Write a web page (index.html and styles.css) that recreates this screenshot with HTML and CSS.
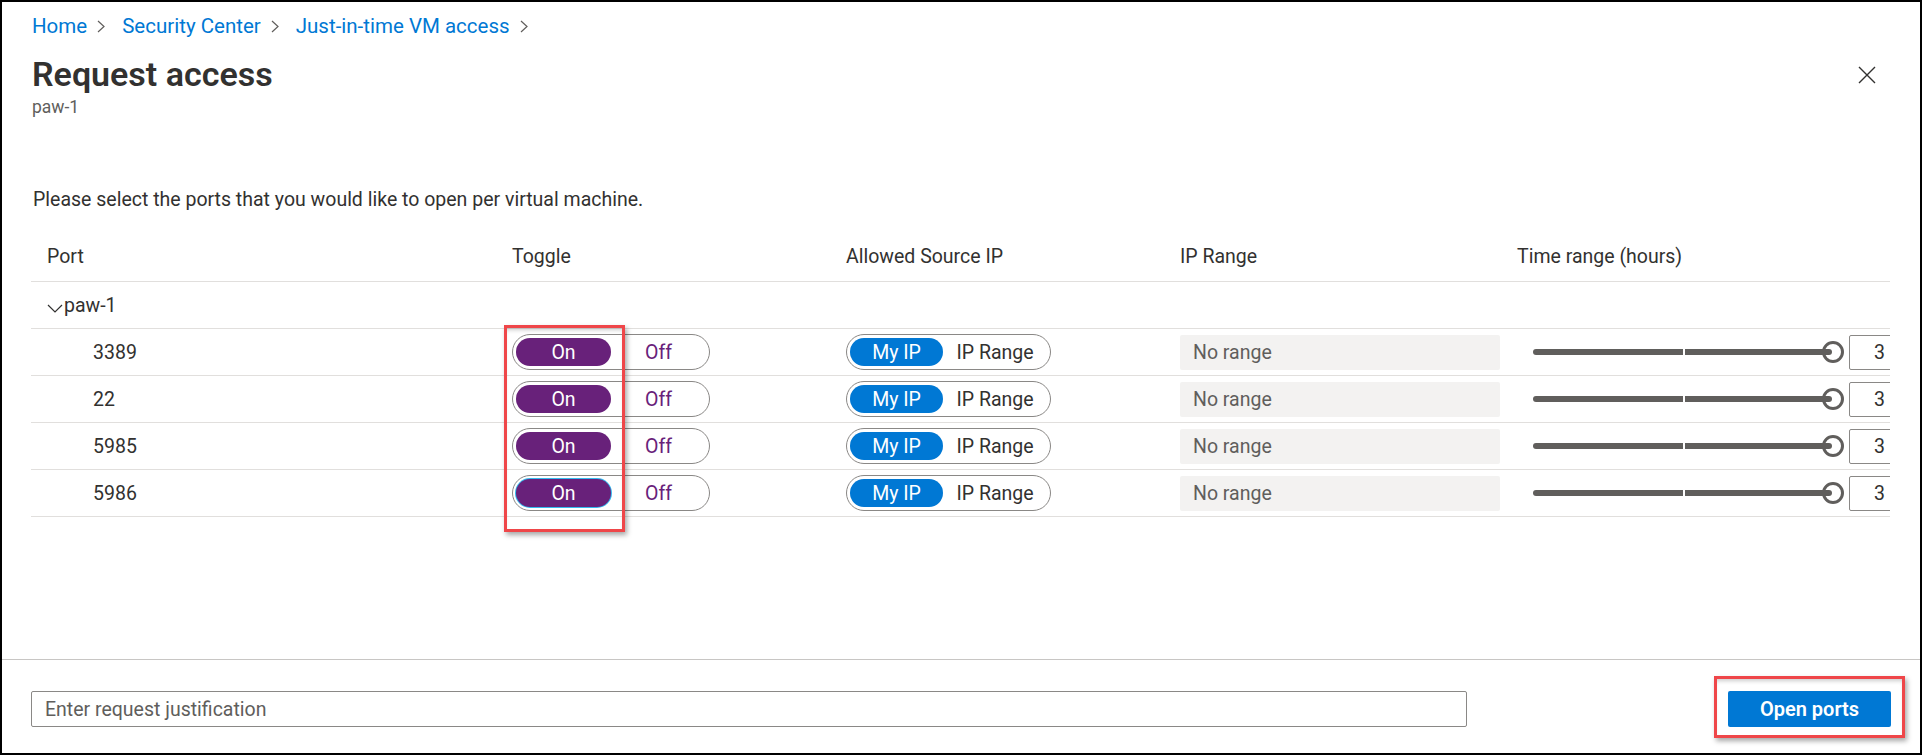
FILE: index.html
```html
<!DOCTYPE html>
<html lang="en">
<head>
<meta charset="utf-8">
<title>Request access</title>
<link rel="stylesheet" href="styles.css">
</head>
<body>
<div class="frame">
  <header class="blade-head">
    <nav class="crumbs">
      <a class="crumb">Home</a>
      <svg class="crumb-sep" viewBox="0 0 8 13"><polyline points="1,1 7,6.5 1,12" /></svg>
      <a class="crumb">Security Center</a>
      <svg class="crumb-sep" viewBox="0 0 8 13"><polyline points="1,1 7,6.5 1,12" /></svg>
      <a class="crumb">Just-in-time VM access</a>
      <svg class="crumb-sep" viewBox="0 0 8 13"><polyline points="1,1 7,6.5 1,12" /></svg>
    </nav>
    <div class="title-row">
      <div class="title-block">
        <h1 class="title">Request access</h1>
        <div class="subtitle">paw-1</div>
      </div>
      <svg class="close" viewBox="0 0 18 18"><path d="M1 1 L17 17 M17 1 L1 17" /></svg>
    </div>
  </header>

  <main class="content">
    <p class="intro">Please select the ports that you would like to open per virtual machine.</p>
    <div class="tbl">
      <div class="row head-row">
        <div class="c-port">Port</div>
        <div>Toggle</div>
        <div>Allowed Source IP</div>
        <div>IP Range</div>
        <div>Time range (hours)</div>
      </div>
      <div class="row group-row">
        <div class="c-port group"><svg class="chev" viewBox="0 0 16 9"><polyline points="1,1 8,8 15,1" /></svg>paw-1</div>
        <div></div><div></div><div></div><div></div>
      </div>

      <div class="row data-row">
        <div class="c-port num">3389</div>
        <div><div class="seg tog"><span class="on">On</span><span class="off">Off</span></div></div>
        <div><div class="seg ipseg"><span class="my">My IP</span><span class="rng">IP Range</span></div></div>
        <div><div class="norange">No range</div></div>
        <div class="c-time"><div class="slider"><div class="track"></div><div class="thumb"></div></div><div class="numbox">3</div></div>
      </div>
      <div class="row data-row">
        <div class="c-port num">22</div>
        <div><div class="seg tog"><span class="on">On</span><span class="off">Off</span></div></div>
        <div><div class="seg ipseg"><span class="my">My IP</span><span class="rng">IP Range</span></div></div>
        <div><div class="norange">No range</div></div>
        <div class="c-time"><div class="slider"><div class="track"></div><div class="thumb"></div></div><div class="numbox">3</div></div>
      </div>
      <div class="row data-row">
        <div class="c-port num">5985</div>
        <div><div class="seg tog"><span class="on">On</span><span class="off">Off</span></div></div>
        <div><div class="seg ipseg"><span class="my">My IP</span><span class="rng">IP Range</span></div></div>
        <div><div class="norange">No range</div></div>
        <div class="c-time"><div class="slider"><div class="track"></div><div class="thumb"></div></div><div class="numbox">3</div></div>
      </div>
      <div class="row data-row">
        <div class="c-port num">5986</div>
        <div><div class="seg tog"><span class="on focused">On</span><span class="off">Off</span></div></div>
        <div><div class="seg ipseg"><span class="my">My IP</span><span class="rng">IP Range</span></div></div>
        <div><div class="norange">No range</div></div>
        <div class="c-time"><div class="slider"><div class="track"></div><div class="thumb"></div></div><div class="numbox">3</div></div>
      </div>
    </div>
  </main>

  <footer class="foot">
    <div class="justify">Enter request justification</div>
    <button class="primary">Open ports</button>
  </footer>

  <div class="hl hl-toggle"></div>
  <div class="hl hl-btn"></div>
</div>
</body>
</html>
```

FILE: styles.css
```css
* { box-sizing: border-box; }
html, body { margin: 0; padding: 0; background: #fff; }
body {
  font-family: Roboto, "Open Sans", sans-serif;
  font-size: 19.5px;
  color: #323130;
}
.frame {
  position: relative;
  width: 1922px;
  height: 755px;
  border: 2px solid #000;
  display: flex;
  flex-direction: column;
  overflow: hidden;
}
.blade-head { padding: 10px 44px 0 30px; }
.crumbs { display: flex; align-items: center; height: 28px; }
.crumb { color: #0078d4; font-size: 20.5px; }
.crumb-sep { width: 8px; height: 13px; margin: 0 17px 0 10px; fill: none; stroke: #605e5c; stroke-width: 1.2; }
.title-row { display: flex; justify-content: space-between; align-items: flex-start; margin-top: 12px; }
.title { margin: 0; font-size: 34px; font-weight: 600; line-height: 44px; color: #323130; }
.subtitle { font-size: 17.5px; line-height: 22px; color: #605e5c; }
.close { width: 18px; height: 18px; margin-top: 14px; fill: none; stroke: #323130; stroke-width: 1.4; }

.content { flex: 1; padding: 0 30px 0 29px; }
.intro { margin: 70px 0 0 2px; line-height: 24px; }
.tbl { margin-top: 20px; overflow: hidden; }
.row {
  display: grid;
  grid-template-columns: 481px 334px 334px 337px 373px;
  align-items: center;
  height: 47px;
  border-bottom: 1px solid #e1dfdd;
}
.head-row { height: 50px; }
.c-port { padding-left: 16px; }
.group { display: flex; align-items: center; }
.chev { width: 16px; height: 9px; fill: none; stroke: #323130; stroke-width: 1.2; margin-top: 6px; margin-right: 1px; }
.num { padding-left: 62px; }

.seg {
  display: inline-flex;
  align-items: center;
  height: 36px;
  padding: 0 3px;
  border: 1px solid #8a8886;
  border-radius: 18px;
}
.seg span {
  display: flex;
  align-items: center;
  justify-content: center;
  height: 28px;
  border-radius: 14px;
}
.tog span { width: 95px; }
.tog .on { background: #68217a; color: #fff; }
.tog .off { color: #68217a; }
.tog .on.focused { box-shadow: 0 0 0 1px #33b9ee; }
.ipseg .my { width: 93px; background: #0078d4; color: #fff; }
.ipseg .rng { width: 104px; color: #323130; }

.norange {
  width: 320px;
  height: 35px;
  display: flex;
  align-items: center;
  padding-left: 13px;
  background: #f3f2f1;
  border-radius: 2px;
  color: #605e5c;
}
.c-time { display: flex; align-items: center; padding-left: 16px; }
.slider { display: flex; align-items: center; width: 311px; flex: none; }
.track { position: relative; flex: 1; height: 6px; border-radius: 3px; background: #605e5c; }
.track::after { content: ""; position: absolute; left: 50%; top: 0; width: 2px; height: 6px; background: #fff; }
.thumb { width: 22px; height: 22px; margin-left: -10px; border: 3px solid #605e5c; border-radius: 50%; background: #fff; flex: none; }
.numbox {
  flex: none;
  width: 50px;
  height: 35px;
  margin-left: 5px;
  border: 1px solid #8a8886;
  border-radius: 2px;
  display: flex;
  align-items: center;
  padding-left: 24px;
}

.foot {
  height: 94px;
  flex: none;
  border-top: 1px solid #c8c6c4;
  display: flex;
  align-items: flex-start;
  justify-content: space-between;
  padding: 31px 29px 0 29px;
}
.justify {
  width: 1436px;
  height: 36px;
  border: 1px solid #8a8886;
  border-radius: 2px;
  display: flex;
  align-items: center;
  padding-left: 13px;
  color: #605e5c;
}
.primary {
  width: 163px;
  height: 36px;
  border: none;
  border-radius: 2px;
  background: #0078d4;
  color: #fff;
  font-family: inherit;
  font-size: 20px;
  font-weight: 600;
}

.hl { position: absolute; border: 3px solid #ef4649; box-shadow: 2px 3px 5px rgba(0,0,0,0.35), inset 0 4px 4px -2px rgba(0,0,0,0.2); }
.hl-toggle { left: 502px; top: 323px; width: 121px; height: 207px; }
.hl-btn { left: 1712px; top: 674px; width: 191px; height: 62px; }
```
